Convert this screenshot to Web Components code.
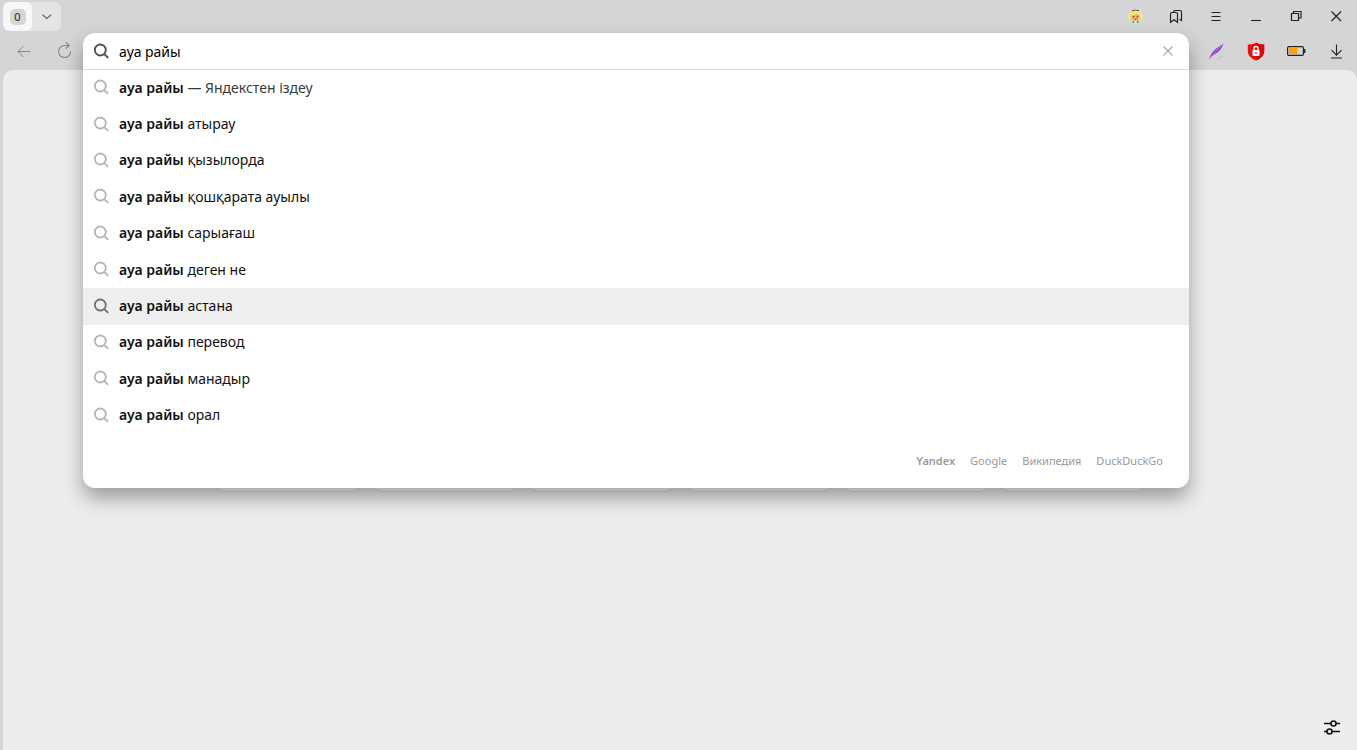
<!DOCTYPE html>
<html lang="kk">
<head>
<meta charset="utf-8">
<title>ауа райы</title>
<style>
  html, body { margin: 0; height: 100%; }
  body { font-family: "Noto Sans", "Open Sans", sans-serif; font-size: 14px; color: #111; background: #d5d5d5; overflow: hidden; }
</style>
</head>
<body>
<browser-window></browser-window>
<script>
const ICONS = {
  search: '<circle cx="11.300" cy="11" r="5.500"/><path d="M15.300 15l3.900 3.900"/>',
  chevron: '<path d="M7.500 9.800l4.300 3.700 4.300-3.700" stroke-width="1.300"/>',
  back: '<path d="M19.500 12.500h-12.500M12.500 7l-5.500 5.500 5.500 5.500" stroke-width="1"/>',
  reload: '<path d="M19.600 12.500A6 6 0 1 1 13.600 6.500H18" stroke-width="1.100"/><path d="M15 3.500l3.200 3-3.200 3" stroke-width="1.100"/>',
  close: '<path d="M7.500 7.500l9.500 9.500M17 7.500L7.500 17" stroke-width="1.200"/>',
  clear: '<path d="M7.500 7.500l9 9M16.500 7.500l-9 9" stroke-width="1.300"/>',
  minimize: '<path d="M7 16.500h10" stroke-width="1.100"/>',
  restore: '<path d="M7.500 9.500h7v7h-7zM9.500 9.500v-2h7.500v6.500h-2.500" stroke-width="1.200"/>',
  menu: '<path d="M7.500 8.500h9M7.500 12.500h9M7.500 16.500h9" stroke-width="1.100"/>',
  bookmarks: '<path d="M6.500 18.300V10q0-1.500 1.500-1.500h4q1.500 0 1.500 1.500v8.300l-3.500-2.600z"/><path d="M9.500 8.500V8q0-1.500 1.500-1.500h5q1.500 0 1.500 1.500v8.500l-2-1.200"/>',
  download: '<path d="M12.500 5.500v10.500M7.500 11.200l5 5 5-5M7 19h11" stroke-width="1.100"/>',
  sliders: '<path d="M4 8.500h7M16 8.500h4M4 16.500h3M12 16.500h8" stroke-width="1.600"/><circle cx="13.500" cy="8.500" r="2.500" stroke-width="1.600"/><circle cx="9.500" cy="16.500" r="2.500" stroke-width="1.600"/>',
  battery: '<rect x="3.600" y="7.600" width="15.800" height="8.800" rx="1.300" fill="#d5d5d5" stroke="#222" stroke-width="1.200"/><rect x="5" y="9" width="8.500" height="6" fill="#ffa200" stroke="none"/><path d="M20.500 10v4" stroke="#222" stroke-width="1.800"/>',
  shield: '<path d="M12 3.500c2 1.500 5 2 8.200 2V12c0 4.500-3.500 7.600-8.200 9.600C7.300 19.600 3.800 16.500 3.800 12V5.500c3.200 0 6.200-.5 8.200-2z" fill="#ed0c10" stroke="none"/><path d="M12 3.500c2 1.500 5 2 8.200 2V12c0 4.500-3.500 7.600-8.200 9.600z" fill="#dc0509" stroke="none"/><rect x="8.500" y="11" width="7" height="6" rx=".8" fill="#fff" stroke="none"/><path d="M10 11V9.500a2 2 0 0 1 4 0V11" stroke="#fff" stroke-width="1.300"/><path d="M12 13v2" stroke="#ed0c10" stroke-width="1.200"/>',
  feather: '<path d="M8 20.200c4-.4 8-1.600 11-3.600-1 2.300-6 4-11 3.600z" fill="#b9b5be" stroke="none"/><path d="M5.200 20.300C6 16 8.500 12.500 12 9.800c3-2.300 5-3.500 7.300-5.600-.3 3.500-2.500 6.300-5 8.500-3 2.600-5.800 3.500-9.100 7.600z" fill="#8e3fc8" stroke="none"/><path d="M5.500 20C9 14.500 14.500 10.500 18.500 5.500" stroke="#c995ee" stroke-width=".8"/>',
  avatar: '<circle cx="11.500" cy="12.500" r="7" fill="#e8e4dc" stroke="none"/><path d="M6 17C4.800 11 6 6.300 11.500 6.300S18.200 11 17 17q-2 2-3.500 1h-4q-1.500 1-3.500-1z" fill="#efe567" stroke="none"/><ellipse cx="11.500" cy="13" rx="4.300" ry="3.800" fill="#e8ab84" stroke="none"/><path d="M7.500 10.500q3.800 0 5.500-2 1 1.500 2.500 2" stroke="#f4ec78" stroke-width="1.600"/><path d="M8 6.800q3.500-1.500 7 0" stroke="#5a5f50" stroke-width="1"/><circle cx="9.600" cy="12.700" r=".8" fill="#574238" stroke="none"/><circle cx="13.400" cy="12.700" r=".8" fill="#574238" stroke="none"/><path d="M10.500 15.300h2" stroke="#d33d42" stroke-width="1"/><path d="M8.500 18h1.600M12.900 18h1.600" stroke="#2d99cd" stroke-width="2"/>'
};

class UiIcon extends HTMLElement {
  constructor() {
    super();
    this.attachShadow({ mode: "open" }).innerHTML = `
      <style>
        :host { display: block; width: 24px; height: 24px; flex: none; }
        svg { display: block; width: 100%; height: 100%; fill: none; stroke: currentColor; stroke-width: var(--stroke, 1.2); }
      </style>
      <svg viewBox="0 0 24 24" aria-hidden="true">${ICONS[this.getAttribute("name")] || ""}</svg>`;
  }
}

class IconButton extends HTMLElement {
  constructor() {
    super();
    this.attachShadow({ mode: "open" }).innerHTML = `
      <style>
        :host { display: block; width: 40px; flex: none; color: #222; }
        button { display: grid; place-items: center; width: 100%; height: 32px; padding: 0; border: 0; background: none; color: inherit; }
      </style>
      <button type="button" aria-label="${this.getAttribute("label")}"><ui-icon name="${this.getAttribute("icon")}"></ui-icon></button>`;
  }
}

class TabStrip extends HTMLElement {
  constructor() {
    super();
    this.attachShadow({ mode: "open" }).innerHTML = `
      <style>
        :host { display: flex; align-items: flex-start; justify-content: space-between; height: 33px; padding: 0 1px 0 3px; }
        .group { display: flex; margin-top: 2px; height: 29px; border-radius: 6px; background: #e4e4e4; overflow: hidden; }
        .group button { display: grid; place-items: center; width: 29px; padding: 0; border: 0; background: none; color: #666; }
        .group .home { background: #f7f7f7; border-radius: 6px; }
        .badge { display: grid; place-items: center; width: 16px; height: 16px; border-radius: 5px; background: #d5d5d5; color: #222; font: 11px/16px "Noto Sans", sans-serif; }
        .actions { display: flex; }
      </style>
      <div class="group">
        <button class="home" type="button"><span class="badge">0</span></button>
        <button type="button" aria-label="Қойындылар"><ui-icon name="chevron"></ui-icon></button>
      </div>
      <div class="actions">
        <icon-button icon="avatar" label="Профиль"></icon-button>
        <icon-button icon="bookmarks" label="Бетбелгілер"></icon-button>
        <icon-button icon="menu" label="Мәзір"></icon-button>
        <icon-button icon="minimize" label="Жию"></icon-button>
        <icon-button icon="restore" label="Қалпына келтіру"></icon-button>
        <icon-button icon="close" label="Жабу"></icon-button>
      </div>`;
  }
}

class SuggestRow extends HTMLElement {
  constructor() {
    super();
    this.attachShadow({ mode: "open" }).innerHTML = `
      <style>
        :host { display: grid; color: #111; --icon: #b5b5b5; }
        :host([active]) { background: #efefef; --icon: #707070; }
        :host([hint]) { --tail: #3a3a3a; }
        button { display: flex; align-items: center; gap: 6px; padding: 0 6px 2px; border: 0; background: none; font: inherit; color: inherit; text-align: left; }
        ui-icon { color: var(--icon); --stroke: 1.8; }
        b { font-weight: 600; }
        .tail { color: var(--tail, inherit); }
      </style>
      <button type="button"><ui-icon name="search"></ui-icon><span><b>ауа райы</b> <span class="tail"><slot></slot></span></span></button>`;
  }
}

class OmniBox extends HTMLElement {
  constructor() {
    super();
    this.attachShadow({ mode: "open" }).innerHTML = `
      <style>
        :host { display: block; position: relative; z-index: 2; flex: 1; min-width: 0; height: 36px; }
        .panel { position: absolute; inset: 0 0 auto; border-radius: 12px; background: #fff; box-shadow: 0 10px 20px rgba(0, 0, 0, .35); overflow: hidden; }
        form { display: flex; align-items: center; gap: 6px; height: 36px; padding: 0 1px 0 6px; border-bottom: 1px solid #dedede; }
        form ui-icon { color: #4b5055; --stroke: 1.9; }
        input { flex: 1; min-width: 0; padding: 0; border: 0; outline: 0; background: none; font: inherit; color: #000; }
        icon-button { color: #aaa; }
        .list { display: grid; grid-auto-rows: 1fr; height: 364px; }
        nav { display: flex; justify-content: flex-end; align-items: center; gap: 15px; height: 54px; padding-right: 26px; }
        nav a { color: #999; font-size: 11px; line-height: 16px; text-decoration: none; }
        nav a:first-child { font-weight: 600; }
      </style>
      <div class="panel">
        <form>
          <ui-icon name="search"></ui-icon>
          <input type="text" aria-label="Іздеу" value="ауа райы">
          <icon-button icon="clear" label="Тазалау"></icon-button>
        </form>
        <div class="list">
          <suggest-row hint>— Яндекстен іздеу</suggest-row>
          <suggest-row>атырау</suggest-row>
          <suggest-row>қызылорда</suggest-row>
          <suggest-row>қошқарата ауылы</suggest-row>
          <suggest-row>сарыағаш</suggest-row>
          <suggest-row>деген не</suggest-row>
          <suggest-row active>астана</suggest-row>
          <suggest-row>перевод</suggest-row>
          <suggest-row>манадыр</suggest-row>
          <suggest-row>орал</suggest-row>
        </div>
        <nav><a href="#yandex">Yandex</a><a href="#google">Google</a><a href="#wikipedia">Википедия</a><a href="#duckduckgo">DuckDuckGo</a></nav>
      </div>`;
  }
}

class ToolBar extends HTMLElement {
  constructor() {
    super();
    this.attachShadow({ mode: "open" }).innerHTML = `
      <style>
        :host { display: flex; align-items: center; height: 36px; padding: 0 1px 1px 3px; }
        .nav, .extensions { display: flex; }
        .nav icon-button { color: #888; }
        .extensions { margin-left: 7px; }
      </style>
      <div class="nav">
        <icon-button icon="back" label="Артқа"></icon-button>
        <icon-button icon="reload" label="Жаңарту"></icon-button>
      </div>
      <omni-box></omni-box>
      <div class="extensions">
        <icon-button icon="feather" label="Қауырсын"></icon-button>
        <icon-button icon="shield" label="Қорғау"></icon-button>
        <icon-button icon="battery" label="Батарея"></icon-button>
        <icon-button icon="download" label="Жүктеулер"></icon-button>
      </div>`;
  }
}

class StartPage extends HTMLElement {
  constructor() {
    super();
    this.attachShadow({ mode: "open" }).innerHTML = `
      <style>
        :host { display: flex; flex-direction: column; justify-content: space-between; box-sizing: border-box; margin-left: 3px; padding: 321px 5px 7px; border-radius: 10px 10px 0 0; background: #ededed; }
        .tiles { display: grid; grid-template-columns: repeat(6, 146px); justify-content: center; gap: 11px; }
        .tile { height: 100px; border-radius: 10px; background: #fafafa; box-shadow: 0 1px 1px rgba(0, 0, 0, .08); }
        icon-button { align-self: flex-end; color: #111; }
      </style>
      <div class="tiles">${'<div class="tile"></div>'.repeat(6)}</div>
      <icon-button icon="sliders" label="Баптау"></icon-button>`;
  }
}

class BrowserWindow extends HTMLElement {
  constructor() {
    super();
    this.attachShadow({ mode: "open" }).innerHTML = `
      <style>:host { display: grid; grid-template-rows: auto auto 1fr; min-height: 100vh; }</style>
      <tab-strip></tab-strip>
      <tool-bar></tool-bar>
      <start-page></start-page>`;
  }
}

customElements.define("ui-icon", UiIcon);
customElements.define("icon-button", IconButton);
customElements.define("tab-strip", TabStrip);
customElements.define("suggest-row", SuggestRow);
customElements.define("omni-box", OmniBox);
customElements.define("tool-bar", ToolBar);
customElements.define("start-page", StartPage);
customElements.define("browser-window", BrowserWindow);
</script>
</body>
</html>
